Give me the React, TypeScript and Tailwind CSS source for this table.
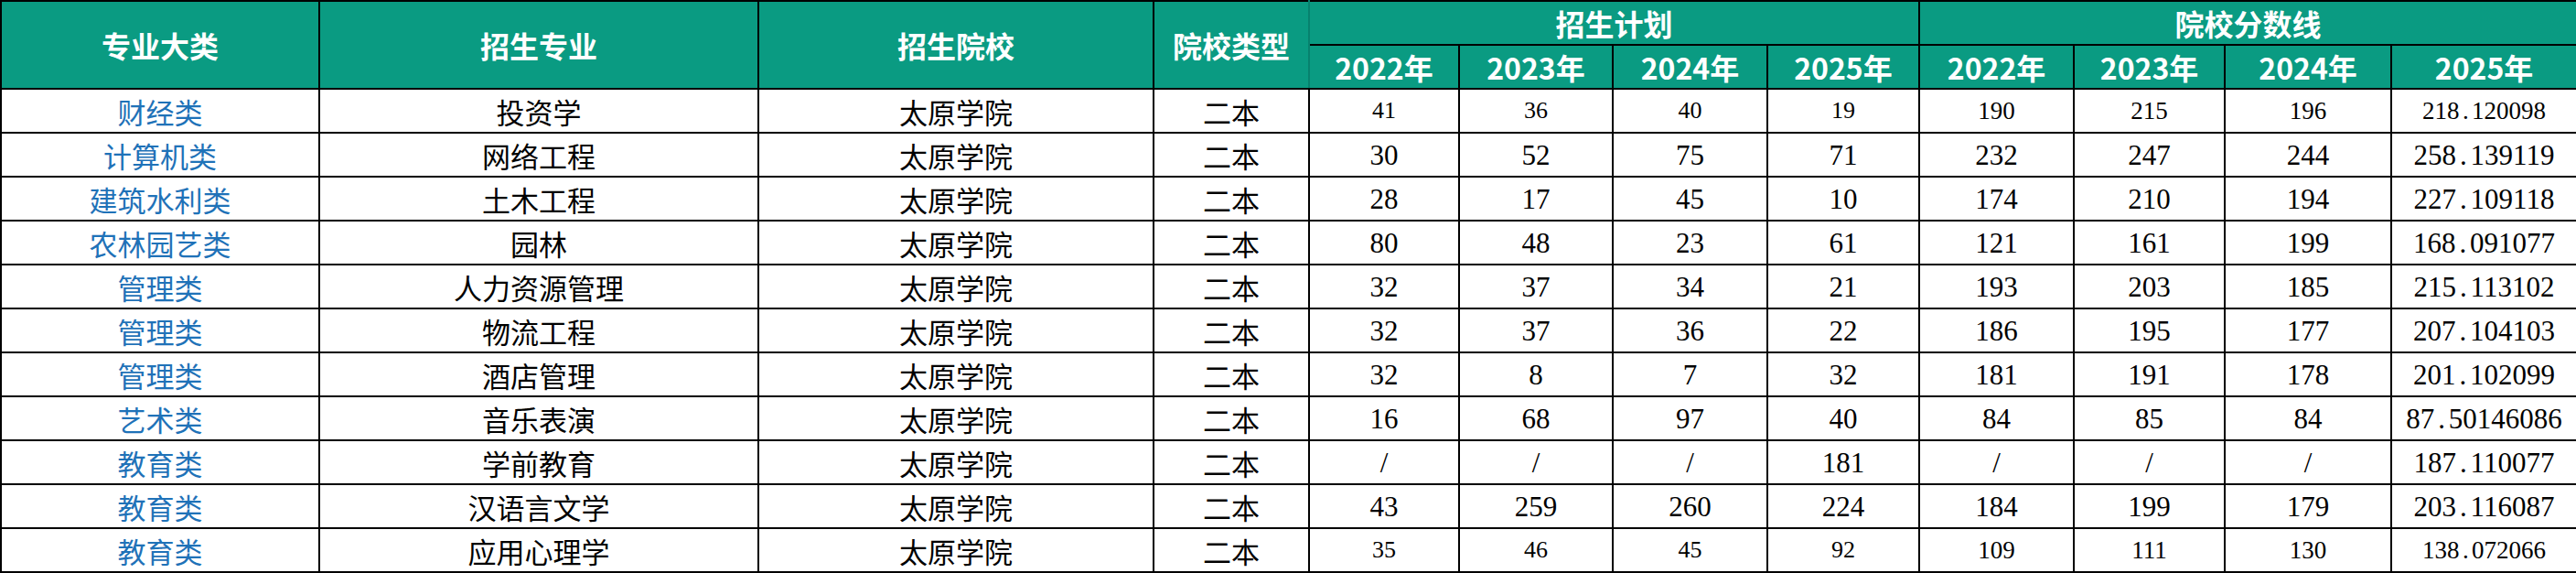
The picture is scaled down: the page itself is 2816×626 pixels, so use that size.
import React from "react";

type Row = {
  cat: string;
  major: string;
  plan: string[];
  score: string[];
  small?: boolean;
};

const rows: Row[] = [
  { cat: "财经类", major: "投资学", plan: ["41", "36", "40", "19"], score: ["190", "215", "196", "218.120098"], small: true },
  { cat: "计算机类", major: "网络工程", plan: ["30", "52", "75", "71"], score: ["232", "247", "244", "258.139119"] },
  { cat: "建筑水利类", major: "土木工程", plan: ["28", "17", "45", "10"], score: ["174", "210", "194", "227.109118"] },
  { cat: "农林园艺类", major: "园林", plan: ["80", "48", "23", "61"], score: ["121", "161", "199", "168.091077"] },
  { cat: "管理类", major: "人力资源管理", plan: ["32", "37", "34", "21"], score: ["193", "203", "185", "215.113102"] },
  { cat: "管理类", major: "物流工程", plan: ["32", "37", "36", "22"], score: ["186", "195", "177", "207.104103"] },
  { cat: "管理类", major: "酒店管理", plan: ["32", "8", "7", "32"], score: ["181", "191", "178", "201.102099"] },
  { cat: "艺术类", major: "音乐表演", plan: ["16", "68", "97", "40"], score: ["84", "85", "84", "87.50146086"] },
  { cat: "教育类", major: "学前教育", plan: ["/", "/", "/", "181"], score: ["/", "/", "/", "187.110077"] },
  { cat: "教育类", major: "汉语言文学", plan: ["43", "259", "260", "224"], score: ["184", "199", "179", "203.116087"] },
  { cat: "教育类", major: "应用心理学", plan: ["35", "46", "45", "92"], score: ["109", "111", "130", "138.072066"], small: true },
];

const years = ["2022年", "2023年", "2024年", "2025年"];

function Num({ v }: { v: string }) {
  const i = v.indexOf(".");
  if (i < 0) return <>{v}</>;
  return (
    <>
      {v.slice(0, i)}
      <span className="inline-block w-[0.5em] text-center">.</span>
      {v.slice(i + 1)}
    </>
  );
}

export default function App() {
  const th =
    "border-2 border-black bg-[#0a9b82] text-white font-bold text-[32px] leading-none text-center align-middle p-0 whitespace-nowrap font-['Noto_Sans_CJK_SC',sans-serif]";
  const tdBase =
    "border-2 border-black text-center align-middle p-0 leading-none whitespace-nowrap";
  const cn = "text-[31px] font-['Noto_Sans_CJK_SC',sans-serif]";
  const num = "font-['Liberation_Serif',serif] text-black";
  return (
    <div className="w-[2816px] h-[626px] bg-white overflow-hidden">
      <table className="w-[2816px] border-collapse table-fixed">
        <colgroup>
          <col className="w-[348px]" />
          <col className="w-[480px]" />
          <col className="w-[432px]" />
          <col className="w-[170px]" />
          <col className="w-[164px]" />
          <col className="w-[168px]" />
          <col className="w-[169px]" />
          <col className="w-[166px]" />
          <col className="w-[169px]" />
          <col className="w-[165px]" />
          <col className="w-[182px]" />
          <col className="w-[203px]" />
        </colgroup>
        <thead>
          <tr className="h-[48px]">
            <th rowSpan={2} className={th}>专业大类</th>
            <th rowSpan={2} className={th}>招生专业</th>
            <th rowSpan={2} className={th}>招生院校</th>
            <th rowSpan={2} className={`${th} border-r-[#07826e]`}>院校类型</th>
            <th colSpan={4} className={th}>招生计划</th>
            <th colSpan={4} className={th}>院校分数线</th>
          </tr>
          <tr className="h-[48px]">
            {years.map((y) => (
              <th key={"p" + y} className={th}>{y}</th>
            ))}
            {years.map((y) => (
              <th key={"s" + y} className={th}>{y}</th>
            ))}
          </tr>
        </thead>
        <tbody>
          {rows.map((r, idx) => (
            <tr key={idx} className="h-[48px]">
              <td className={`${tdBase} ${cn} text-[#1f72b8]`}>{r.cat}</td>
              <td className={`${tdBase} ${cn} text-black`}>{r.major}</td>
              <td className={`${tdBase} ${cn} text-black`}>太原学院</td>
              <td className={`${tdBase} ${cn} text-black`}>二本</td>
              {r.plan.map((v, j) => (
                <td key={"p" + j} className={`${tdBase} ${num} ${r.small ? "text-[26px]" : "text-[31px]"}`}>
                  <Num v={v} />
                </td>
              ))}
              {r.score.map((v, j) => (
                <td key={"s" + j} className={`${tdBase} ${num} ${r.small ? "text-[27px]" : "text-[31px]"}`}>
                  <Num v={v} />
                </td>
              ))}
            </tr>
          ))}
        </tbody>
      </table>
    </div>
  );
}
